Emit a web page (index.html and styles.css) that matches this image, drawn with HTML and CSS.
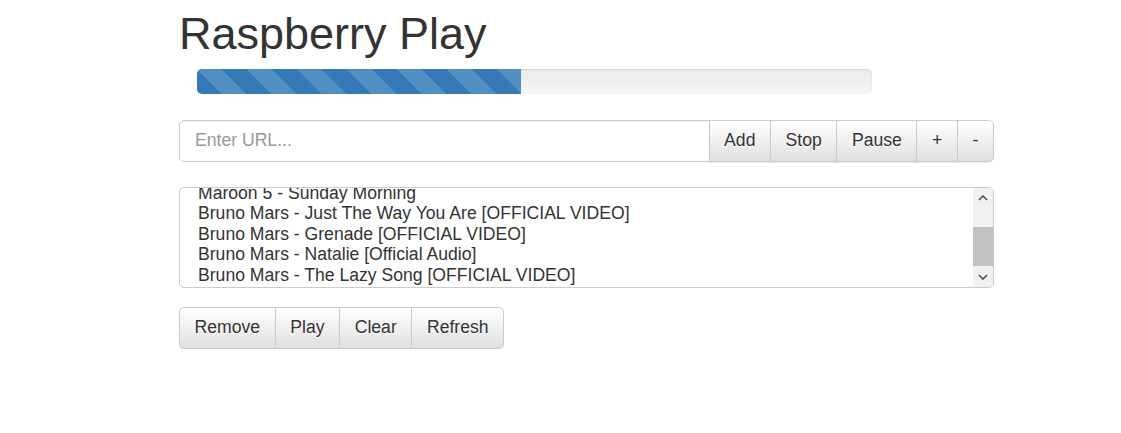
FILE: index.html
```html
<!DOCTYPE html>
<html lang="en">
<head>
<meta charset="utf-8">
<title>Raspberry Play</title>
<link rel="stylesheet" href="styles.css">
</head>
<body>
<div class="page">
  <h1 class="title">Raspberry Play</h1>
  <div class="progress">
    <div class="progress-bar" style="width: 48%"></div>
  </div>
  <div class="input-group">
    <input class="url-input" type="text" placeholder="Enter URL...">
    <button class="btn">Add</button>
    <button class="btn">Stop</button>
    <button class="btn">Pause</button>
    <button class="btn">+</button>
    <button class="btn btn-last">-</button>
  </div>
  <div class="playlist">
    <div class="playlist-view">
      <ul class="playlist-items">
        <li>Maroon 5 - Sunday Morning</li>
        <li>Bruno Mars - Just The Way You Are [OFFICIAL VIDEO]</li>
        <li>Bruno Mars - Grenade [OFFICIAL VIDEO]</li>
        <li>Bruno Mars - Natalie [Official Audio]</li>
        <li>Bruno Mars - The Lazy Song [OFFICIAL VIDEO]</li>
      </ul>
    </div>
    <div class="scrollbar">
      <div class="sb-arrow">
        <svg width="10" height="6" viewBox="0 0 10 6"><polyline points="1,5 5,1 9,5" fill="none" stroke="#505050" stroke-width="1.6"/></svg>
      </div>
      <div class="sb-track">
        <div class="sb-thumb"></div>
      </div>
      <div class="sb-arrow">
        <svg width="10" height="6" viewBox="0 0 10 6"><polyline points="1,1 5,5 9,1" fill="none" stroke="#505050" stroke-width="1.6"/></svg>
      </div>
    </div>
  </div>
  <div class="btn-group">
    <button class="btn btn-first">Remove</button>
    <button class="btn">Play</button>
    <button class="btn">Clear</button>
    <button class="btn btn-last">Refresh</button>
  </div>
</div>
</body>
</html>
```

FILE: styles.css
```css
html, body {
  margin: 0;
  padding: 0;
  background: #fff;
}
body {
  font-family: "Liberation Sans", Arial, Helvetica, sans-serif;
  font-size: 17.6px;
  color: #333;
}
.page {
  margin-left: 179px;
  width: 815px;
  padding-top: 9px;
}
.title {
  margin: 0;
  font-size: 45px;
  font-weight: 500;
  line-height: 1.1;
  color: #333;
}
.progress {
  margin: 10px 0 0 18px;
  width: 675px;
  height: 25px;
  border-radius: 5px;
  overflow: hidden;
  background: linear-gradient(to bottom, #ebebeb 0, #f5f5f5 100%);
  box-shadow: inset 0 1px 2px rgba(0, 0, 0, 0.1);
}
.progress-bar {
  height: 100%;
  background-color: #337ab7;
  background-image: linear-gradient(45deg,
    rgba(255,255,255,.15) 25%, transparent 25%,
    transparent 50%, rgba(255,255,255,.15) 50%,
    rgba(255,255,255,.15) 75%, transparent 75%, transparent);
  background-size: 50px 50px;
}
.input-group {
  display: flex;
  margin-top: 26px;
  height: 42px;
}
.url-input {
  flex: 1;
  min-width: 0;
  box-sizing: border-box;
  height: 42px;
  margin: 0;
  padding: 0 15px;
  border: 1px solid #ccc;
  border-radius: 5px 0 0 5px;
  font-family: inherit;
  font-size: 17.6px;
  color: #555;
  box-shadow: inset 0 1px 1px rgba(0, 0, 0, 0.075);
  outline: none;
}
.url-input::placeholder {
  color: #999;
}
.btn {
  box-sizing: border-box;
  height: 42px;
  margin: 0 0 0 -1px;
  padding: 0 14.6px;
  border: 1px solid #ccc;
  border-radius: 0;
  background: linear-gradient(to bottom, #fff 0, #e0e0e0 100%);
  font-family: inherit;
  font-size: 17.6px;
  color: #333;
  text-shadow: 0 1px 0 #fff;
  box-shadow: inset 0 1px 0 rgba(255,255,255,.15), 0 1px 1px rgba(0,0,0,.075);
  cursor: pointer;
}
.btn-first {
  margin-left: 0;
  border-radius: 5px 0 0 5px;
}
.btn-last {
  border-radius: 0 5px 5px 0;
}
.playlist {
  display: flex;
  margin-top: 25px;
  height: 101px;
  box-sizing: border-box;
  border: 1px solid #ccc;
  border-radius: 5px;
  overflow: hidden;
}
.playlist-view {
  flex: 1;
  overflow: hidden;
  padding-left: 18px;
}
.playlist-items {
  list-style: none;
  margin: -5px 0 0;
  padding: 0;
  line-height: 20.6px;
  color: #333;
}
.scrollbar {
  width: 20px;
  display: flex;
  flex-direction: column;
  background: #f1f1f1;
}
.sb-arrow {
  height: 20px;
  display: flex;
  align-items: center;
  justify-content: center;
}
.sb-track {
  flex: 1;
  display: flex;
  flex-direction: column;
  padding-top: 19px;
}
.sb-thumb {
  height: 39px;
  background: #c1c1c1;
}
.btn-group {
  display: flex;
  margin-top: 19px;
}
```
